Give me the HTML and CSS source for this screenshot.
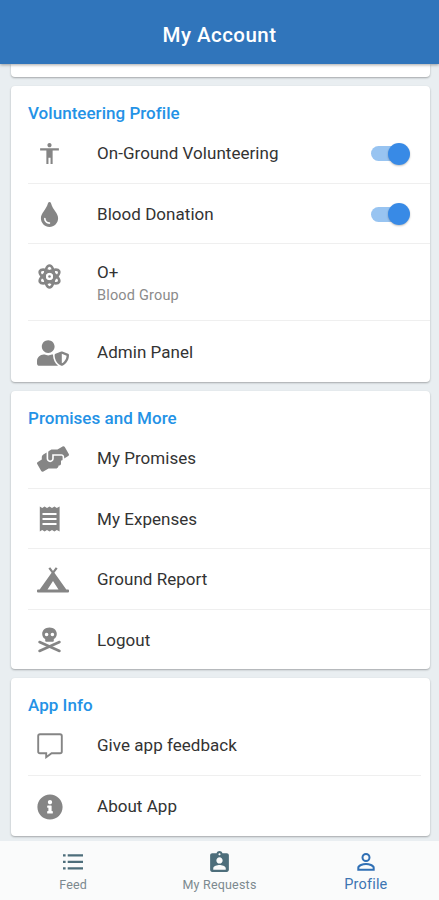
FILE: index.html
```html
<!DOCTYPE html>
<html lang="en">
<head>
<meta charset="utf-8">
<title>My Account</title>
<link rel="stylesheet" href="styles.css">
</head>
<body>
<div class="app">
  <header class="header"><h1>My Account</h1></header>
  <main class="content">
    <section class="card card-cut"></section>
    <section class="card card-volunteer">
      <h2>Volunteering Profile</h2>
      <div class="row">
        <span class="icon"><svg width="25" height="25" viewBox="0 0 24 24"><path d="M12 2c1.1 0 2 .9 2 2s-.9 2-2 2-2-.9-2-2 .9-2 2-2zm9 7h-6v13h-2v-6h-2v6H9V9H3V7h18v2z"/></svg></span>
        <span class="label">On-Ground Volunteering</span><span class="switch"></span>
      </div>
      <div class="row">
        <span class="icon"><svg class="center" width="19" height="25" viewBox="0 0 352 512"><path d="M205.22 22.09c-7.94-28.78-49.44-30.12-58.44 0C100.01 179.85 0 222.72 0 333.91 0 432.35 78.72 512 176 512s176-79.65 176-178.09c0-111.75-99.79-153.34-146.78-311.82zM176 448c-61.75 0-112-50.25-112-112 0-8.84 7.16-16 16-16s16 7.16 16 16c0 44.11 35.89 80 80 80 8.84 0 16 7.16 16 16s-7.16 16-16 16z"/></svg></span>
        <span class="label">Blood Donation</span><span class="switch"></span>
      </div>
      <div class="row row-tall">
        <span class="icon"><svg width="25" height="25" viewBox="0 0 25 25"><g fill="none" stroke="#858585" stroke-width="2.6"><ellipse cx="12.5" cy="12.5" rx="4.7" ry="11"/><ellipse cx="12.5" cy="12.5" rx="4.7" ry="11" transform="rotate(60 12.5 12.5)"/><ellipse cx="12.5" cy="12.5" rx="4.7" ry="11" transform="rotate(120 12.5 12.5)"/></g><circle cx="12.5" cy="12.5" r="3.5" fill="#fff"/><circle cx="12.5" cy="12.5" r="1.3"/></svg></span>
        <span class="label">O+<small>Blood Group</small></span>
      </div>
      <div class="row">
        <span class="icon"><svg width="32" height="26" viewBox="0 0 640 512"><path d="M622.3 271.1l-115.2-45c-4.1-1.6-12.6-3.7-22.2 0l-115.2 45c-10.7 4.2-17.7 14-17.7 24.9 0 111.6 68.7 188.8 132.9 213.9 9.6 3.7 18 1.6 22.2 0C558.4 489.9 640 420.5 640 296c0-10.9-7-20.7-17.7-24.9zM496 462.4V273.3l95.5 37.3c-5.6 87.1-60.9 135.4-95.5 151.8zM224 256c70.7 0 128-57.3 128-128S294.7 0 224 0 96 57.3 96 128s57.3 128 128 128zm96 40c0-2.5.8-4.8 1.1-7.2-2.5-.1-4.9-.8-7.5-.8h-16.7c-22.2 10.2-46.9 16-72.9 16s-50.6-5.8-72.9-16h-16.7C60.2 288 0 348.2 0 422.4V464c0 26.5 21.5 48 48 48h352c6.8 0 13.3-1.5 19.2-4-54-42.9-99.2-116.7-99.2-212z"/></svg></span>
        <span class="label">Admin Panel</span>
      </div>
    </section>
    <section class="card">
      <h2>Promises and More</h2>
      <div class="row">
        <span class="icon"><svg width="32" height="26" viewBox="0 0 640 512"><path d="M488 192H336v56c0 39.7-32.3 72-72 72s-72-32.3-72-72V126.4l-64.9 39C107.8 176.9 96 197.8 96 220.2v47.3l-80 46.2C.7 322.5-4.6 342.1 4.3 357.4l80 138.6c8.8 15.3 28.4 20.5 43.7 11.7L231.4 448H368c35.3 0 64-28.7 64-64h16c17.7 0 32-14.3 32-32v-64h8c13.3 0 24-10.7 24-24v-48c0-13.3-10.7-24-24-24zm147.7-37.4L555.7 16C546.9.7 527.3-4.5 512 4.3L408.6 64H306.4c-12 0-23.7 3.4-33.9 9.7L239 94.6c-9.4 5.8-15 16.1-15 27.1V248c0 22.1 17.9 40 40 40s40-17.9 40-40v-88h184c30.9 0 56 25.1 56 56v28.5l80-46.2c15.3-8.9 20.5-28.4 11.7-43.7z"/></svg></span>
        <span class="label">My Promises</span>
      </div>
      <div class="row">
        <span class="icon"><svg width="25" height="26" viewBox="0 0 25 26"><path fill-rule="evenodd" d="M2.8.5l2.4 1.6L7.6.5 10 2.1 12.5.5 15 2.1 17.4.5l2.4 1.6L22.6.5v25l-2.8-1.6-2.4 1.6-2.4-1.6-2.5 1.6-2.5-1.6-2.4 1.6-2.4-1.6-2.4 1.6zM5.5 7v2h14V7zm0 5v2h14v-2zm0 5v2h14v-2z"/></svg></span>
        <span class="label">My Expenses</span>
      </div>
      <div class="row">
        <span class="icon"><svg width="32" height="26" viewBox="0 0 32 26"><path fill-rule="evenodd" d="M11.4 1.5 13.2.2 16 3.9 18.8.2l1.8 1.3-3.2 4.3L29.3 22.5H31q1 0 1 1v1q0 1-1 1H1q-1 0-1-1v-1q0-1 1-1h1.7L14.6 5.8zM16 14 10.5 22.5h11z"/></svg></span>
        <span class="label">Ground Report</span>
      </div>
      <div class="row">
        <span class="icon"><svg width="25" height="26" viewBox="0 0 25 26"><path fill-rule="evenodd" d="M12.5.5c-4.3 0-7.3 2.8-7.3 6.4 0 2.3 1.2 4 3 5.2v1.7q0 1 1 1h6.6q1 0 1-1v-1.7c1.8-1.2 3-2.9 3-5.2 0-3.6-3-6.4-7.3-6.4zM9.6 5.7a1.8 1.8 0 1 0 0 3.6 1.8 1.8 0 0 0 0-3.6zm5.8 0a1.8 1.8 0 1 0 0 3.6 1.8 1.8 0 0 0 0-3.6z"/><path d="M2.5 15l20 9M22.5 15l-20 9" fill="none" stroke="#858585" stroke-width="2.5" stroke-linecap="round"/></svg></span>
        <span class="label">Logout</span>
      </div>
    </section>
    <section class="card card-info">
      <h2>App Info</h2>
      <div class="row">
        <span class="icon"><svg width="26" height="26" viewBox="0 0 26 26"><path d="M3 1.2h20q1.8 0 1.8 1.8v15.5q0 1.8-1.8 1.8h-8.4L9.2 24.2v-3.9H3q-1.8 0-1.8-1.8V3q0-1.8 1.8-1.8z" fill="none" stroke="#858585" stroke-width="1.9"/></svg></span>
        <span class="label">Give app feedback</span>
      </div>
      <div class="row">
        <span class="icon"><svg width="26" height="26" viewBox="0 0 512 512"><path d="M256 8C119.043 8 8 119.083 8 256c0 136.997 111.043 248 248 248s248-111.003 248-248C504 119.083 392.957 8 256 8zm0 110c23.196 0 42 18.804 42 42s-18.804 42-42 42-42-18.804-42-42 18.804-42 42-42zm56 254c0 6.627-5.373 12-12 12h-88c-6.627 0-12-5.373-12-12v-24c0-6.627 5.373-12 12-12h12v-64h-12c-6.627 0-12-5.373-12-12v-24c0-6.627 5.373-12 12-12h64c6.627 0 12 5.373 12 12v100h12c6.627 0 12 5.373 12 12v24z"/></svg></span>
        <span class="label">About App</span>
      </div>
    </section>
  </main>
  <nav class="nav">
    <div class="tab"><svg width="22" height="22" viewBox="0 0 22 22"><path d="M1 3.2h2.6v2.2H1zm4.7 0H21v2.2H5.7zM1 9.7h2.6v2.2H1zm4.7 0H21v2.2H5.7zM1 16.2h2.6v2.2H1zm4.7 0H21v2.2H5.7z"/></svg><span>Feed</span></div>
    <div class="tab"><svg width="25" height="25" viewBox="0 0 24 24"><path d="M19 3h-4.18C14.4 1.84 13.3 1 12 1c-1.3 0-2.4.84-2.82 2H5c-1.1 0-2 .9-2 2v14c0 1.1.9 2 2 2h14c1.1 0 2-.9 2-2V5c0-1.1-.9-2-2-2zm-7 0c.55 0 1 .45 1 1s-.45 1-1 1-1-.45-1-1 .45-1 1-1zm0 4c1.66 0 3 1.34 3 3s-1.34 3-3 3-3-1.34-3-3 1.34-3 3-3zm6 12H6v-1.4c0-2 4-3.1 6-3.1s6 1.1 6 3.1V19z"/></svg><span>My Requests</span></div>
    <div class="tab active"><svg width="20" height="20" viewBox="0 0 20 20"><g fill="none" stroke="#3070b5" stroke-width="2"><circle cx="10" cy="5.5" r="3.5"/><path d="M2.3 17.7v-1.9c0-2.4 4.6-3.8 7.7-3.8s7.7 1.4 7.7 3.8v1.9z"/></g></svg><span>Profile</span></div>
  </nav>
</div>
</body>
</html>
```
FILE: styles.css
```css
* { box-sizing: border-box; }
body { margin: 0; font-family: Roboto, sans-serif; color: #333; background: #e9eef1; }
.app { height: 900px; display: flex; flex-direction: column; overflow: hidden; }
.header { flex: none; height: 64px; padding-top: 5px; display: flex; align-items: center; justify-content: center; background: #3075bb; color: #fff; box-shadow: 0 1px 3px rgba(0,0,0,.35); z-index: 1; }
h1 { margin: 0; font-size: 20.5px; font-weight: 500; letter-spacing: .45px; }
.content { flex: 1; min-height: 0; padding: 0 9px 0 11px; display: flex; flex-direction: column; gap: 9px; }
.card { flex: none; background: #fff; border-radius: 4px; box-shadow: 0 1px 2px rgba(0,0,0,.3); }
.card-cut { height: 13px; border-radius: 0 0 4px 4px; }
h2 { margin: 0; height: 37px; padding: 16px 0 0 17px; font-size: 17px; line-height: 22px; font-weight: 500; letter-spacing: .03px; color: #2492e6; }
.row { height: 60.5px; margin-left: 17px; padding: 2px 20px 0 9px; display: flex; align-items: center; border-bottom: 1px solid #efefef; }
.row:last-child { border-bottom: 0; height: 59.5px; }
.card-volunteer .row:last-child { height: 61px; }
.row-tall { height: 77px; }
.row-tall .icon { align-self: flex-start; margin-top: 18px; }
.row-tall .label { padding-top: 2px; }
.icon { flex: none; width: 60px; display: flex; align-items: center; }
.icon svg { display: block; fill: #858585; }
.icon .center { margin-left: 3px; }
.label { flex: 1; font-size: 17px; line-height: 23px; letter-spacing: .04px; }
.label small { display: block; font-size: 14.5px; color: #8b8b8b; letter-spacing: .18px; }
.switch { width: 39px; height: 22px; display: flex; align-items: center; justify-content: flex-end; }
.switch::before { content: ""; width: 32px; height: 15px; margin-right: -15px; border-radius: 8px; background: #98c4f1; }
.switch::after { content: ""; width: 22px; height: 22px; border-radius: 50%; background: #388ae6; box-shadow: 0 1px 2px rgba(0,0,0,.25); }
.card-info .row { margin-right: 9px; }
.card-info .row:last-child { height: 60.5px; }
.nav { flex: none; height: 59px; display: grid; grid-template-columns: repeat(3, 1fr); background: #fafbfb; z-index: 1; }
.tab { display: grid; grid-template-rows: 34px 12px; align-content: start; justify-items: center; align-items: center; padding-top: 4px; font-size: 12.5px; line-height: 12px; letter-spacing: .2px; color: #7c898f; fill: #4d6e7b; }
.tab svg { display: block; }
.active { color: #3d75b2; font-size: 14.5px; letter-spacing: .2px; }
```
